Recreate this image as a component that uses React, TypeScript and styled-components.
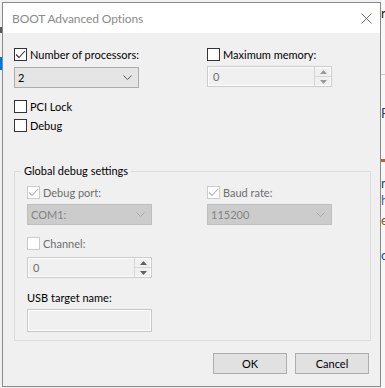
import React from 'react';
import styled, { createGlobalStyle } from 'styled-components';

const GlobalStyle = createGlobalStyle`
  html, body {
    margin: 0;
    padding: 0;
    background: #f0f0f0;
  }
  body {
    font-family: Lato, "Liberation Sans", sans-serif;
    font-size: 11px;
    color: #000;
  }
`;

const Screen = styled.div`
  display: flex;
  width: 385px;
  height: 388px;
  overflow: hidden;
  background: #f0f0f0;
`;

// slivers of the window behind the dialog
const LeftStrip = styled.div`
  width: 2px;
  flex: none;
  display: flex;
  flex-direction: column;
`;

const StripMark = styled.div<{ $top: number; $height: number; $color: string }>`
  margin-top: ${({ $top }) => $top}px;
  height: ${({ $height }) => $height}px;
  background: ${({ $color }) => $color};
  flex: none;
`;

const RightStrip = styled.div`
  width: 4px;
  flex: none;
  display: flex;
  flex-direction: column;
  overflow: hidden;
  background: #f7f7f7;
`;

const StripGlyph = styled.div<{ $top: number; $color: string }>`
  margin-top: ${({ $top }) => $top}px;
  height: 12px;
  line-height: 12px;
  font-size: 13px;
  color: ${({ $color }) => $color};
  white-space: nowrap;
  flex: none;
`;

const Dialog = styled.div`
  margin-top: 2px;
  width: 379px;
  height: 385px;
  box-sizing: border-box;
  border: 1px solid #8a8a8a;
  display: flex;
  flex-direction: column;
  flex: none;
  background: #f0f0f0;
`;

const TitleBar = styled.div`
  height: 30px;
  flex: none;
  background: #fff;
  display: flex;
  align-items: center;
  justify-content: space-between;
  padding: 0 8px 0 9px;
`;

const Title = styled.span`
  color: #8a8a8a;
  font-size: 12px;
  letter-spacing: -0.1px;
`;

const Body = styled.div`
  flex: 1;
  padding: 13px 10px 0 11px;
  display: flex;
  flex-direction: column;
`;

const Columns = styled.div<{ $gap: number }>`
  display: grid;
  grid-template-columns: 125px 125px;
  column-gap: ${({ $gap }) => $gap}px;
`;

const Column = styled.div`
  display: flex;
  flex-direction: column;
`;

const CheckRow = styled.label<{ $mt?: number; $disabled?: boolean }>`
  display: flex;
  align-items: center;
  height: 16px;
  margin-top: ${({ $mt }) => $mt ?? 0}px;
  color: ${({ $disabled }) => ($disabled ? '#6d6d6d' : '#000')};
  white-space: nowrap;
`;

const Box = styled.span<{ $disabled?: boolean }>`
  width: 13px;
  height: 13px;
  box-sizing: border-box;
  border: 1px solid ${({ $disabled }) => ($disabled ? '#cccccc' : '#333333')};
  background: #fff;
  margin-right: 3px;
  flex: none;
  display: flex;
  align-items: center;
  justify-content: center;
`;

const Combo = styled.div<{ $disabled?: boolean; $mt?: number }>`
  margin-top: ${({ $mt }) => $mt ?? 0}px;
  height: 21px;
  box-sizing: border-box;
  border: 1px solid ${({ $disabled }) => ($disabled ? '#bfbfbf' : '#acacac')};
  background: ${({ $disabled }) => ($disabled ? '#cccccc' : '#e5e5e5')};
  color: ${({ $disabled }) => ($disabled ? '#838383' : '#000')};
  display: flex;
  align-items: center;
  justify-content: space-between;
  padding: 0 6px 0 3px;
`;

const Spin = styled.div<{ $mt?: number }>`
  margin-top: ${({ $mt }) => $mt ?? 0}px;
  height: 21px;
  box-sizing: border-box;
  border: 1px solid #cccccc;
  background: #f0f0f0;
  box-shadow: inset 0 0 0 1px #fcfcfc;
  display: flex;
`;

const SpinValue = styled.span`
  flex: 1;
  display: flex;
  align-items: center;
  padding-left: 5px;
  color: #6d6d6d;
`;

const SpinButtons = styled.div`
  width: 16px;
  display: flex;
  flex-direction: column;
  border-left: 1px solid #d6d6d6;
`;

const SpinHalf = styled.div<{ $top?: boolean }>`
  flex: 1;
  display: flex;
  align-items: center;
  justify-content: center;
  border-bottom: ${({ $top }) => ($top ? '1px solid #d6d6d6' : 'none')};
`;

const GroupBox = styled.fieldset`
  margin: 30px 0 0 0;
  width: 357px;
  box-sizing: border-box;
  border: 1px solid #dcdcdc;
  padding: 5px 0 8px 12px;
  min-width: 0;
`;

const Legend = styled.legend`
  margin-left: -6px;
  padding: 0 3px;
  line-height: 16px;
  height: 16px;
  color: #000;
`;

const FieldLabel = styled.div<{ $mt?: number }>`
  margin-top: ${({ $mt }) => $mt ?? 0}px;
  height: 16px;
  line-height: 16px;
  color: #000;
`;

const TextBox = styled.div`
  margin-top: 3px;
  height: 23px;
  width: 125px;
  box-sizing: border-box;
  border: 1px solid #c8c8c8;
  background: #f0f0f0;
  box-shadow: inset 0 0 0 1px #fff;
`;

const Buttons = styled.div`
  margin-top: 12px;
  display: flex;
  justify-content: flex-end;
  gap: 8px;
  padding-right: 1px;
`;

const Button = styled.button`
  width: 74px;
  height: 21px;
  box-sizing: border-box;
  border: 1px solid #adadad;
  background: #e1e1e1;
  font-family: inherit;
  font-size: 11px;
  color: #000;
  padding: 0;
`;

const CheckMark = ({ color }: { color: string }) => (
  <svg width="11" height="11" viewBox="0 0 11 11">
    <polyline points="1,5.5 4,8.5 10,2" fill="none" stroke={color} strokeWidth="1.1" />
  </svg>
);

const Chevron = ({ color }: { color: string }) => (
  <svg width="9" height="5" viewBox="0 0 9 5">
    <polyline points="0.5,0.5 4.5,4.5 8.5,0.5" fill="none" stroke={color} strokeWidth="1" />
  </svg>
);

const Arrow = ({ up, color }: { up?: boolean; color: string }) => (
  <svg width="7" height="4" viewBox="0 0 7 4">
    <polygon points={up ? '0,4 3.5,0 7,4' : '0,0 3.5,4 7,0'} fill={color} />
  </svg>
);

const CloseIcon = () => (
  <svg width="11" height="11" viewBox="0 0 11 11">
    <path d="M0.5 0.5 L10.5 10.5 M10.5 0.5 L0.5 10.5" stroke="#6e6e6e" strokeWidth="1" />
  </svg>
);

interface CheckProps {
  label: string;
  checked?: boolean;
  disabled?: boolean;
  mt?: number;
}

const Check: React.FC<CheckProps> = ({ label, checked, disabled, mt }) => (
  <CheckRow $mt={mt} $disabled={disabled}>
    <Box $disabled={disabled}>{checked && <CheckMark color={disabled ? '#b4b4b4' : '#333'} />}</Box>
    {label}
  </CheckRow>
);

const SpinBox: React.FC<{ value: string; mt?: number; arrow: string }> = ({ value, mt, arrow }) => (
  <Spin $mt={mt}>
    <SpinValue>{value}</SpinValue>
    <SpinButtons>
      <SpinHalf $top>
        <Arrow up color={arrow} />
      </SpinHalf>
      <SpinHalf>
        <Arrow color={arrow} />
      </SpinHalf>
    </SpinButtons>
  </Spin>
);

export default function App() {
  return (
    <>
      <GlobalStyle />
      <Screen>
        <LeftStrip>
          <StripMark $top={27} $height={6} $color="#5a5a5a" />
          <StripMark $top={24} $height={13} $color="#0078d7" />
        </LeftStrip>
        <Dialog>
          <TitleBar>
            <Title>BOOT Advanced Options</Title>
            <CloseIcon />
          </TitleBar>
          <Body>
            <Columns $gap={68}>
              <Column>
                <Check label="Number of processors:" checked />
                <Combo $mt={5}>
                  <span>2</span>
                  <Chevron color="#555" />
                </Combo>
                <Check label="PCI Lock" mt={10} />
                <Check label="Debug" mt={3} />
              </Column>
              <Column>
                <Check label="Maximum memory:" />
                <SpinBox value="0" mt={4} arrow="#9a9a9a" />
              </Column>
            </Columns>
            <GroupBox>
              <Legend>Global debug settings</Legend>
              <Columns $gap={55}>
                <Column>
                  <Check label="Debug port:" checked disabled />
                  <Combo $disabled $mt={4}>
                    <span>COM1:</span>
                    <Chevron color="#aaa" />
                  </Combo>
                  <Check label="Channel:" disabled mt={10} />
                  <SpinBox value="0" mt={6} arrow="#606060" />
                  <FieldLabel $mt={12}>USB target name:</FieldLabel>
                  <TextBox />
                </Column>
                <Column>
                  <Check label="Baud rate:" checked disabled />
                  <Combo $disabled $mt={4}>
                    <span>115200</span>
                    <Chevron color="#aaa" />
                  </Combo>
                </Column>
              </Columns>
            </GroupBox>
            <Buttons>
              <Button>OK</Button>
              <Button>Cancel</Button>
            </Buttons>
          </Body>
        </Dialog>
        <RightStrip>
          <StripGlyph $top={7} $color="#222">r</StripGlyph>
          <StripMark $top={55} $height={1} $color="#c8c8c8" />
          <StripGlyph $top={32} $color="#1e3f66">R</StripGlyph>
          <StripMark $top={40} $height={3} $color="#c0603c" />
          <StripGlyph $top={15} $color="#1d3d8f">n</StripGlyph>
          <StripGlyph $top={5} $color="#3a5fb0">h</StripGlyph>
          <StripGlyph $top={8} $color="#7a5a20">e</StripGlyph>
          <StripGlyph $top={23} $color="#1e4a8a">c</StripGlyph>
        </RightStrip>
      </Screen>
    </>
  );
}
